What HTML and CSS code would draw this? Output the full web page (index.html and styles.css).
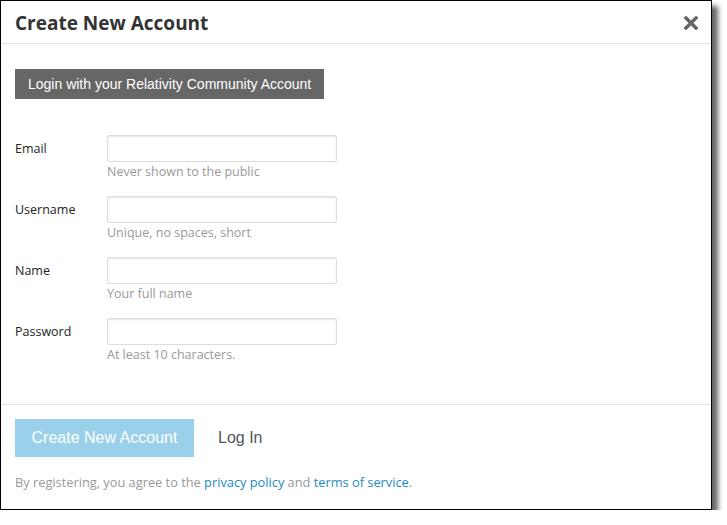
FILE: index.html
```html
<!DOCTYPE html>
<html>
<head>
<meta charset="utf-8">
<link rel="stylesheet" href="styles.css">
</head>
<body>
<div class="dialog">
  <div class="header">
    <h1 class="title">Create New Account</h1>
    <span class="close" aria-label="close">
      <svg width="14" height="14" viewBox="0 0 14 14"><path d="M2 2 L12 12 M12 2 L2 12" stroke="#666" stroke-width="3.4" stroke-linecap="square"/></svg>
    </span>
  </div>
  <div class="content">
    <button class="btn-community">Login with your Relativity Community Account</button>
    <div class="form">
      <div class="row">
        <label class="label">Email</label>
        <div class="field">
          <input class="input" type="text">
          <div class="hint">Never shown to the public</div>
        </div>
      </div>
      <div class="row">
        <label class="label">Username</label>
        <div class="field">
          <input class="input" type="text">
          <div class="hint">Unique, no spaces, short</div>
        </div>
      </div>
      <div class="row">
        <label class="label">Name</label>
        <div class="field">
          <input class="input" type="text">
          <div class="hint">Your full name</div>
        </div>
      </div>
      <div class="row">
        <label class="label">Password</label>
        <div class="field">
          <input class="input" type="password">
          <div class="hint">At least 10 characters.</div>
        </div>
      </div>
    </div>
  </div>
  <div class="footer">
    <div class="actions">
      <button class="btn-primary">Create New Account</button>
      <a class="login-link">Log In</a>
    </div>
    <p class="terms">By registering, you agree to the <a class="link">privacy policy</a> and <a class="link">terms of service</a>.</p>
  </div>
</div>
</body>
</html>
```
FILE: styles.css
```css
html, body {
  margin: 0;
  padding: 0;
  background: #fff;
}
body {
  font-family: "Open Sans", "DejaVu Sans", sans-serif;
}
.dialog {
  box-sizing: border-box;
  width: 712px;
  height: 510px;
  border: 1px solid #000;
  background: #fff;
  box-shadow: 6px 6px 5px rgba(0,0,0,0.6);
  display: flex;
  flex-direction: column;
}
.header {
  flex: none;
  border-bottom: 1px solid #e5e5e5;
  display: flex;
  align-items: center;
  justify-content: space-between;
  padding: 2px 13px 0 14px;
  box-sizing: border-box;
  height: 43px;
}
.title {
  margin: 0;
  font-size: 19px;
  font-weight: 700;
  color: #333;
  line-height: 22px;
}
.close {
  display: flex;
  width: 14px;
  height: 14px;
}
.content {
  flex: none;
  padding: 25px 14px 0 14px;
  height: 361px;
  box-sizing: border-box;
  border-bottom: 1px solid #e5e5e5;
}
.btn-community {
  display: block;
  height: 30px;
  padding: 0 13px;
  border: none;
  background: #666;
  color: #fff;
  font-family: "Liberation Sans", Arial, sans-serif;
  font-size: 14px;
  cursor: pointer;
}
.form {
  margin-top: 36px;
  display: flex;
  flex-direction: column;
  gap: 16px;
}
.row {
  display: flex;
}
.label {
  width: 92px;
  height: 27px;
  line-height: 27px;
  font-size: 12.5px;
  color: #222;
}
.field {
  display: flex;
  flex-direction: column;
}
.input {
  box-sizing: border-box;
  width: 230px;
  height: 27px;
  margin: 0;
  border: 1px solid #ddd;
  border-radius: 2px;
  box-shadow: inset 0 1px 2px rgba(0,0,0,0.1);
  background: #fff;
}
.hint {
  font-size: 12.5px;
  color: #999;
  line-height: 18px;
  margin-top: 1px;
  margin-bottom: -1px;
}
.footer {
  flex: none;
  padding: 14px 14px 0 14px;
}
.actions {
  display: flex;
  align-items: center;
  gap: 24px;
}
.btn-primary {
  height: 38px;
  width: 179px;
  border: none;
  background: #9bd0eb;
  color: #fff;
  font-family: "Liberation Sans", Arial, sans-serif;
  font-size: 16px;
  cursor: pointer;
}
.login-link {
  font-family: "Liberation Sans", Arial, sans-serif;
  font-size: 16px;
  color: #555;
}
.terms {
  margin: 16px 0 0 0;
  font-size: 12.8px;
  color: #999;
  line-height: 18px;
}
.link {
  color: #1a8ac6;
}
```
